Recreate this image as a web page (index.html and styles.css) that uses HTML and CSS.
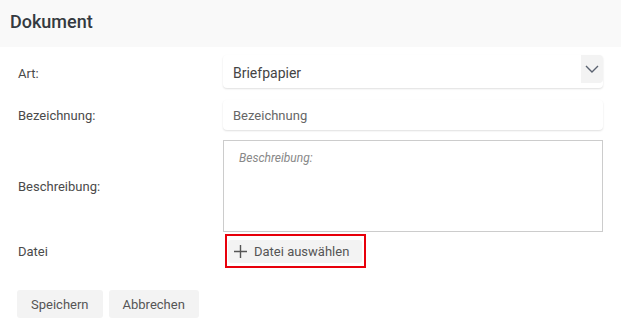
FILE: index.html
```html
<!DOCTYPE html>
<html>
  <head>
    <meta charset="utf-8" />
    <title>Dokument</title>
    <meta name="viewport" content="width=device-width, initial-scale=1.0" />
    <link rel="stylesheet" href="styles.css">
  </head>
  <body>
    <div class="panelHeader">
      <h1 class="panelTitle">Dokument</h1>
    </div>
    <div class="formBody">
      <div class="formRow rowArt">
        <label class="formLabel labelArt" for="art">Art:</label>
        <div class="selectField" id="art">
          <span class="selectValue">Briefpapier</span>
          <span class="selectToggle">
            <svg width="14" height="8" viewBox="0 0 14 8">
              <path d="M1 1 L7 7 L13 1" fill="none" stroke="#5a6270" stroke-width="1.4" />
            </svg>
          </span>
        </div>
      </div>
      <div class="formRow rowName">
        <label class="formLabel" for="bezeichnung">Bezeichnung:</label>
        <input type="text" id="bezeichnung" class="inputField" placeholder="Bezeichnung" />
      </div>
      <div class="formRow rowDesc">
        <label class="formLabel" for="beschreibung">Beschreibung:</label>
        <textarea id="beschreibung" class="textField" placeholder="Beschreibung:"></textarea>
      </div>
      <div class="formRow rowFile">
        <label class="formLabel">Datei</label>
        <div class="highlightBox">
          <button type="button" class="fileButton">
            <svg width="13" height="13" viewBox="0 0 13 13">
              <path d="M6.5 0 V13 M0 6.5 H13" fill="none" stroke="#555" stroke-width="1.4" />
            </svg>
            Datei auswählen
          </button>
        </div>
      </div>
      <div class="formActions">
        <button type="submit" class="actionButton">Speichern</button>
        <button type="button" class="actionButton">Abbrechen</button>
      </div>
    </div>
  </body>
</html>
```

FILE: styles.css
```css
body {
  margin: 0;
  font-family: Roboto, "Liberation Sans", Arial, sans-serif;
  background: #ffffff;
  color: #444;
}
.panelHeader {
  height: 47px;
  box-sizing: border-box;
  padding: 11px 10px 0 10px;
  background-color: #f9f9f9;
}
.panelTitle {
  margin: 0;
  font-size: 18px;
  line-height: 21px;
  font-weight: 500;
  color: #343a40;
}
.formBody {
  padding: 0 18px;
}
.formRow {
  display: flex;
  align-items: center;
}
.formLabel {
  width: 205px;
  flex-shrink: 0;
  font-size: 13px;
  line-height: 15px;
  color: #4a4a4a;
}
.labelArt {
  padding-top: 4px;
}
.rowArt {
  margin-top: 8px;
}
.rowName {
  margin-top: 12px;
}
.rowDesc {
  margin-top: 10px;
}
.rowFile {
  margin-top: 2px;
}
.selectField {
  flex: 1;
  height: 33px;
  display: flex;
  align-items: flex-start;
  border-radius: 4px;
  box-shadow: 0 1px 2px rgba(0, 0, 0, 0.13);
}
.selectValue {
  flex: 1;
  padding: 10px 0 0 10px;
  font-size: 14px;
  line-height: 17px;
  color: #444;
}
.selectToggle {
  width: 22px;
  height: 28px;
  display: flex;
  align-items: center;
  justify-content: center;
  background-color: #f3f3f3;
  border-radius: 0 4px 4px 0;
}
.inputField {
  flex: 1;
  height: 30px;
  box-sizing: border-box;
  border: none;
  outline: none;
  padding: 0 10px;
  border-radius: 4px;
  box-shadow: 0 1px 2px rgba(0, 0, 0, 0.13);
  font-family: Roboto, "Liberation Sans", Arial, sans-serif;
  font-size: 13px;
  color: #444;
}
.inputField::placeholder {
  color: #666;
}
.textField {
  flex: 1;
  height: 92px;
  box-sizing: border-box;
  border: 1px solid #cccccc;
  outline: none;
  resize: none;
  padding: 10px 15px;
  margin: 0;
  font-family: Roboto, "Liberation Sans", Arial, sans-serif;
  font-size: 12px;
  line-height: 15px;
  color: #444;
}
.textField::placeholder {
  font-style: italic;
  color: #888;
}
.highlightBox {
  display: inline-flex;
  margin-left: 2px;
  padding: 4px 2px 3px 1px;
  border: 2px solid #e8000b;
}
.fileButton {
  height: 23px;
  display: inline-flex;
  align-items: center;
  gap: 7px;
  padding: 0 13px 0 6px;
  border: none;
  border-radius: 3px;
  background-color: #f3f3f3;
  font-family: Roboto, "Liberation Sans", Arial, sans-serif;
  font-size: 13px;
  color: #555;
  cursor: pointer;
}
.formActions {
  display: flex;
  gap: 6px;
  margin-top: 22px;
  margin-left: -1px;
}
.actionButton {
  height: 28px;
  padding: 0 14px;
  border: none;
  border-radius: 3px;
  background-color: #f3f3f3;
  font-family: Roboto, "Liberation Sans", Arial, sans-serif;
  font-size: 13px;
  color: #555;
  cursor: pointer;
}
```
